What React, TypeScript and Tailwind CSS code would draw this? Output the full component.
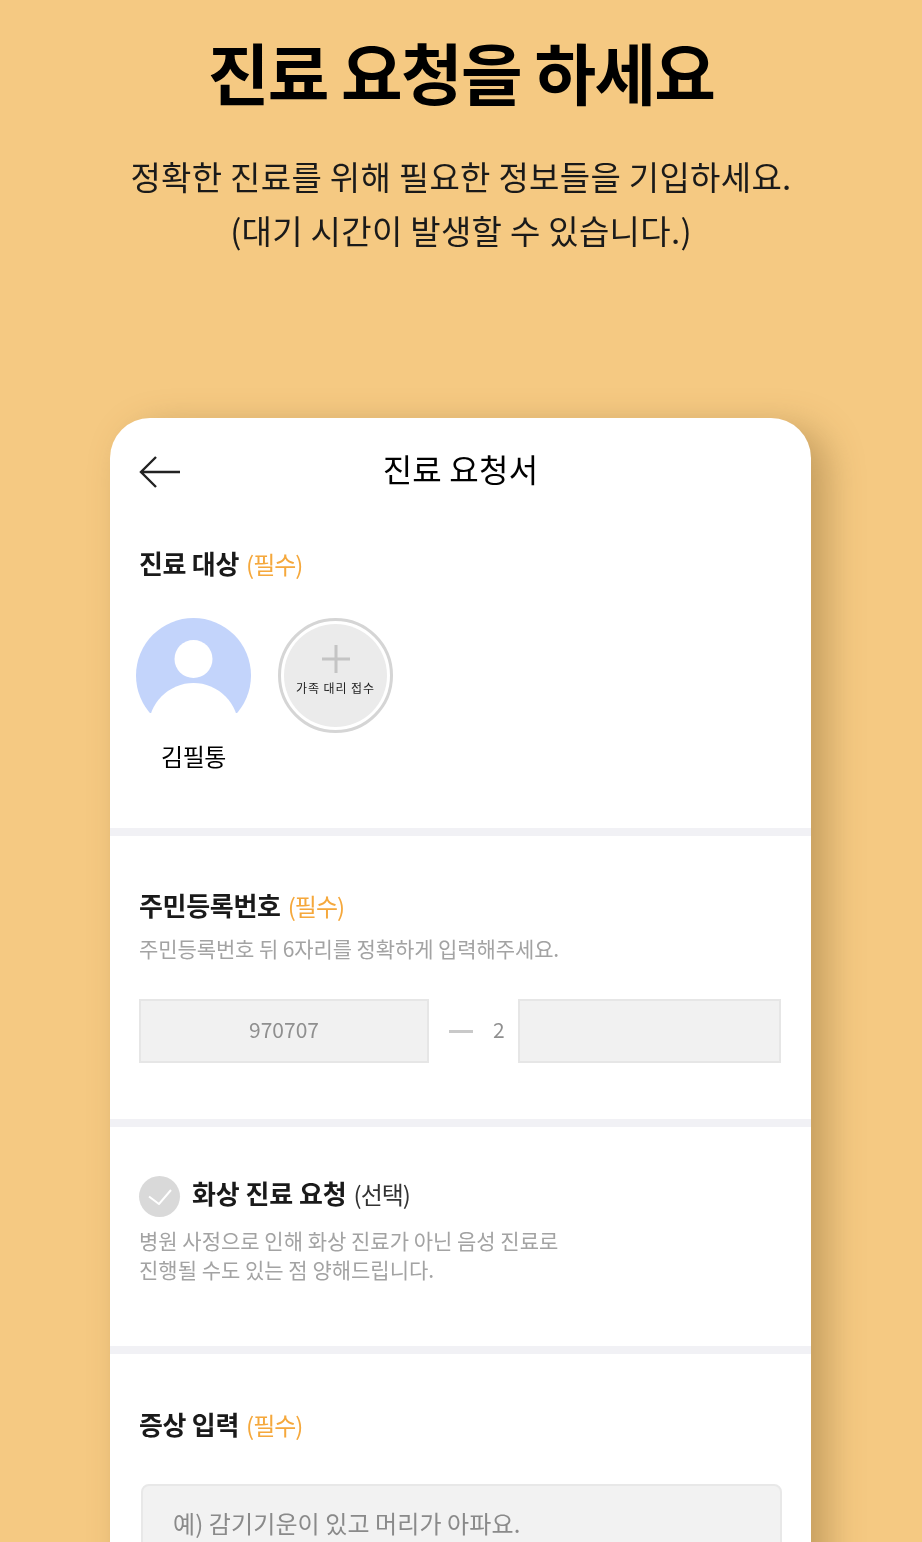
import React from "react";

function Req() {
  return <span className="text-[24px] font-normal text-[#f5a83c] ml-[7px] tracking-[-1px]">(필수)</span>;
}

function Title({ children }: { children: React.ReactNode }) {
  return <div className="text-[26px] leading-[36px] font-bold text-[#1a1a1a] tracking-[-0.3px] flex items-baseline">{children}</div>;
}

export default function App() {
  return (
    <div className="h-[1542px] w-[922px] overflow-hidden bg-[#f5c982] flex flex-col items-center [font-family:'Noto_Sans_CJK_KR','Noto_Sans',sans-serif] blur-[0.4px]">
      <h1 className="mt-[26px] text-[67px] leading-[90px] font-bold text-black tracking-[-1.7px] whitespace-nowrap">진료 요청을 하세요</h1>
      <p className="mt-[33px] text-[33px] leading-[54px] text-[#1a1a1a] text-center tracking-[0.3px] whitespace-nowrap">
        정확한 진료를 위해 필요한 정보들을 기입하세요.
        <br />
        (대기 시간이 발생할 수 있습니다.)
      </p>
      <div className="mt-[161px] -ml-[1px] w-[701px] shrink-0 bg-white rounded-t-[40px] shadow-[16px_10px_36px_rgba(120,90,40,0.4)] flex flex-col">
        <header className="h-[104px] shrink-0 relative flex items-center justify-center pb-[5px]">
          <svg className="absolute left-[29px] top-[37px]" width="42" height="34" viewBox="0 0 42 34" fill="none" stroke="#222" strokeWidth="2.4">
            <path d="M41 17H2M17 2L2 17l15 15" />
          </svg>
          <span className="text-[32px] leading-[44px] font-normal text-black tracking-[0.2px]">진료 요청서</span>
        </header>

        <section className="h-[314px] shrink-0 border-b-[8px] border-[#f1f1f5] px-[29px] pt-[23px]">
          <Title>
            진료 대상 <Req />
          </Title>
          <div className="mt-[36px] flex gap-[27px] -ml-[3px]">
            <div className="flex flex-col items-center w-[115px]">
              <svg width="115" height="115" viewBox="0 0 115 115" className="block">
                <circle cx="57.5" cy="57.5" r="57.5" fill="#c3d4fb" />
                <circle cx="57.5" cy="41" r="19" fill="#fff" />
                <circle cx="57.5" cy="110" r="45" fill="#fff" />
                <rect x="0" y="95" width="115" height="20" fill="#fff" />
              </svg>
              <div className="mt-[5px] text-[24px] leading-[36px] font-normal text-black tracking-[-0.4px] whitespace-nowrap">김필통</div>
            </div>
            <div className="w-[115px] h-[115px] rounded-full border-[3px] border-[#d5d5d5] p-[3px]">
              <div className="w-full h-full rounded-full bg-[#ebebeb] flex flex-col items-center pt-[21px]">
                <svg width="28" height="28" viewBox="0 0 28 28" stroke="#c4c4c4" strokeWidth="3">
                  <path d="M14 0v28M0 14h28" />
                </svg>
                <div className="mt-[6px] text-[12px] leading-[18px] font-normal text-[#222] tracking-[0.9px] whitespace-nowrap">가족 대리 접수</div>
              </div>
            </div>
          </div>
        </section>

        <section className="h-[291px] shrink-0 border-b-[8px] border-[#f1f1f5] px-[29px] pt-[51px]">
          <Title>
            주민등록번호 <Req />
          </Title>
          <p className="mt-[9px] text-[21px] leading-[30px] text-[#a3a3a3] tracking-[-0.1px] whitespace-nowrap">주민등록번호 뒤 6자리를 정확하게 입력해주세요.</p>
          <div className="mt-[36px] flex items-center w-[642px]">
            <div className="w-[290px] h-[64px] pb-[3px] bg-[#f1f1f1] border-2 border-[#e6e6e6] flex items-center justify-center text-[21px] text-[#8f8f8f]">970707</div>
            <div className="w-[24px] h-[3px] bg-[#c9c9c9] ml-[20px]" />
            <div className="ml-[20px] mb-[3px] text-[21px] text-[#8f8f8f]">2</div>
            <div className="ml-auto w-[263px] h-[64px] bg-[#f1f1f1] border-2 border-[#e6e6e6]" />
          </div>
        </section>

        <section className="h-[227px] shrink-0 border-b-[8px] border-[#f1f1f5] px-[29px] pt-[48px]">
          <div className="flex items-center gap-[12px]">
            <div className="w-[41px] h-[41px] rounded-full bg-[#d9d9d9] flex items-center justify-center">
              <svg width="24" height="16" viewBox="0 0 24 16" fill="none" stroke="#fff" strokeWidth="2">
                <path d="M1 7.5L11 15L23 1" />
              </svg>
            </div>
            <div className="mb-[6px] text-[26px] leading-[36px] font-bold text-[#1a1a1a] tracking-[-0.1px] flex items-baseline">
              화상 진료 요청
              <span className="ml-[7px] text-[24px] font-normal text-[#333] tracking-[-1px]">(선택)</span>
            </div>
          </div>
          <p className="mt-[8px] text-[21px] leading-[29px] text-[#a3a3a3] tracking-[0px] whitespace-nowrap">
            병원 사정으로 인해 화상 진료가 아닌 음성 진료로
            <br />
            진행될 수도 있는 점 양해드립니다.
          </p>
        </section>

        <section className="px-[29px] pt-[52px]">
          <Title>
            증상 입력 <Req />
          </Title>
          <div className="mt-[41px] ml-[2px] w-[641px] h-[120px] rounded-t-[8px] bg-[#f2f2f2] border-2 border-[#e8e8e8] px-[30px] pt-[19px] text-[24px] leading-[36px] text-[#8a8a8a] tracking-[0.1px] whitespace-nowrap">
            예) 감기기운이 있고 머리가 아파요.
          </div>
        </section>
      </div>
    </div>
  );
}
